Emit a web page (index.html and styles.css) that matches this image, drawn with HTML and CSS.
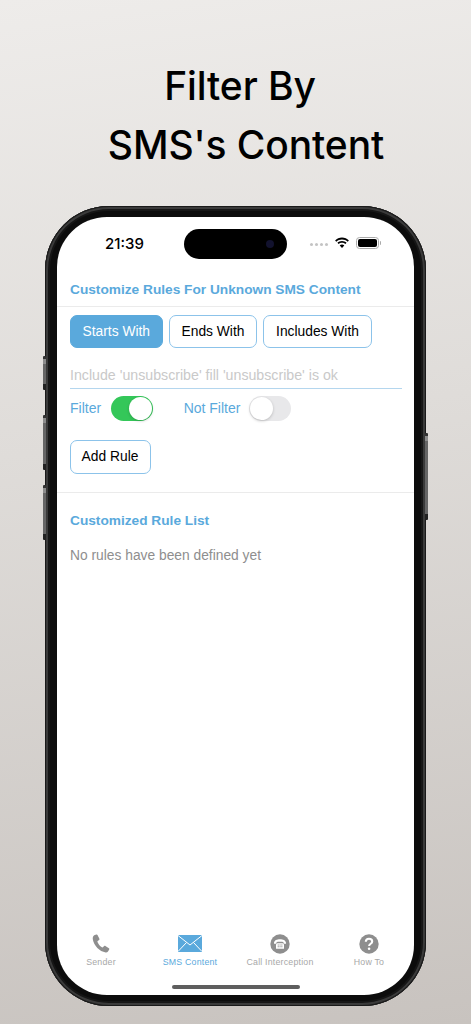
FILE: index.html
```html
<!DOCTYPE html>
<html lang="en">
<head>
<meta charset="utf-8">
<title>Filter By SMS's Content</title>
<link rel="stylesheet" href="styles.css">
</head>
<body>
<main class="page">
  <h1 class="title"><span class="line-one">Filter By</span><span class="line-two">SMS's Content</span></h1>
  <div class="phone">
    <span class="side side-a"></span>
    <span class="side side-b"></span>
    <span class="side side-c"></span>
    <span class="side side-d"></span>
    <div class="screen">
      <div class="island"><span class="lens"></span></div>
      <header class="status">
        <span class="time">21:39</span>
        <div class="status-icons">
          <span class="dots"><i></i><i></i><i></i><i></i></span>
          <svg class="wifi" width="16" height="12" viewBox="0 0 16 12"><path d="M8 2.400c2.200 0 4.200.9 5.700 2.300l1.200-1.300C13.100 1.600 10.700.5 8 .5S2.900 1.600 1.100 3.400l1.200 1.300C3.800 3.300 5.800 2.400 8 2.400z"/><path d="M8 5.800c1.300 0 2.500.5 3.400 1.300l1.200-1.300C11.400 4.700 9.800 4 8 4s-3.400.7-4.600 1.800l1.200 1.300C5.500 6.300 6.700 5.800 8 5.800z"/><path d="M8 7.500c-.9 0-1.700.3-2.300.9L8 11l2.300-2.600C9.700 7.800 8.900 7.500 8 7.500z"/></svg>
          <span class="battery"><span class="battery-fill"></span></span>
        </div>
      </header>
      <section class="rules">
        <h2 class="heading">Customize Rules For Unknown SMS Content</h2>
        <div class="tabs">
          <button class="btn btn-active tab-starts">Starts With</button>
          <button class="btn tab-ends">Ends With</button>
          <button class="btn tab-includes">Includes With</button>
        </div>
        <div class="field">Include 'unsubscribe' fill 'unsubscribe' is ok</div>
        <div class="toggles">
          <span class="toggle-label">Filter</span>
          <span class="switch switch-on"><span class="knob"></span></span>
          <span class="toggle-label label-not">Not Filter</span>
          <span class="switch"><span class="knob"></span></span>
        </div>
        <button class="btn btn-add">Add Rule</button>
      </section>
      <section class="list">
        <h2 class="heading">Customized Rule List</h2>
        <p class="empty">No rules have been defined yet</p>
      </section>
      <nav class="tabbar">
        <div class="tab">
          <svg width="20" height="20" viewBox="0 0 20 20"><path fill="#8e8e8e" d="M3.200 1.300 5.300.5c.5-.2 1 0 1.200.5l1.900 3.800c.2.500.1.900-.3 1.200L6.700 7c-.3.300-.4.600-.2 1 .9 2.200 2.300 4 4.400 5.300.4.200.7.200 1-.1l1.300-1.100c.4-.3.800-.4 1.200-.1l3.500 2.300c.5.300.6.800.3 1.200l-1.200 1.900c-.5.800-1.300 1.200-2.300 1.100C8.500 17.500 3 11.800 1.800 5.300c-.2-1.700.2-3.200 1.400-4z"/></svg>
          <span class="tab-text">Sender</span>
        </div>
        <div class="tab tab-on">
          <svg class="mail" width="24" height="17" viewBox="0 0 24 17"><rect width="24" height="17" fill="#5aa9dc"/><path d="M0 .5 12 10 24 .5M0 16.500 8.500 7.500M24 16.500 15.500 7.500" fill="none" stroke="#fff" stroke-width="1"/></svg>
          <span class="tab-text">SMS Content</span>
        </div>
        <div class="tab">
          <svg width="20" height="20" viewBox="0 0 20 20"><circle cx="10" cy="10" r="9.700" fill="#8e8e8e"/><path fill="#fff" d="M4 8.800C4.300 6.300 7 5.300 10 5.300s5.700 1 6 3.500v.9h-2.500V8.300c-1-.6-6-.6-7 0v1.400H4z"/><path fill="#fff" fill-rule="evenodd" d="M6 10.400 7.300 9.200h5.400l1.300 1.200v4.300H6zM7.700 10.600v.9h1.100v-.9zm1.800 0v.9h1.100v-.9zm1.800 0v.9h1.100v-.9zM7.700 12.300v.9h1.100v-.9zm1.800 0v.9h1.100v-.9zm1.800 0v.9h1.100v-.9z"/></svg>
          <span class="tab-text">Call Interception</span>
        </div>
        <div class="tab">
          <svg width="20" height="20" viewBox="0 0 20 20"><circle cx="10" cy="10" r="9.700" fill="#8e8e8e"/><path fill="none" stroke="#fff" stroke-width="2.100" d="M6.800 7.700C6.900 5.700 8.200 4.700 10 4.700c1.900 0 3.200 1.100 3.200 2.700 0 2.400-3.100 2.300-3.100 4.700"/><circle cx="10.100" cy="14.700" r="1.300" fill="#fff"/></svg>
          <span class="tab-text">How To</span>
        </div>
      </nav>
      <div class="home-bar"></div>
    </div>
  </div>
</main>
</body>
</html>
```
FILE: styles.css
```css
* { box-sizing: border-box; }
html, body { margin: 0; padding: 0; }
body { width: 471px; height: 1024px; overflow: hidden; font-family: "Liberation Sans", Arial, sans-serif; }
.page {
  width: 471px; height: 1024px; overflow: hidden;
  display: flex; flex-direction: column; align-items: center;
  background: linear-gradient(172deg, #eeecea 0%, #dfdcd9 42%, #c8c3bf 100%);
}
.title { margin: 56px 0 0 9px; display: flex; flex-direction: column; align-items: center; font-size: 39px; line-height: 59px; font-weight: 500; color: #000; height: 144px; font-family: Inter, sans-serif; letter-spacing: -.1px; }
.line-two { margin-left: 12px; }
.phone {
  position: relative; margin-top: 6px; width: 381px; height: 800px; flex: none;
  border-radius: 64px; padding: 11px 12px; background: #0c0c0c;
  box-shadow: inset 0 0 0 1px #1a1a1a, inset 0 0 0 3px #3a3a3a, inset 0 0 0 5px #161616;
}
.side { position: absolute; width: 3px; background: linear-gradient(180deg, #333 0 3px, #8c8c8c 3px 8px, #666 8px calc(100% - 6px), #222 calc(100% - 6px)); border-radius: 1px; }
.side-a { left: -2px; top: 150px; height: 34px; }
.side-b { left: -2px; top: 209px; height: 55px; }
.side-c { left: -2px; top: 279px; height: 55px; }
.side-d { right: -2px; top: 227px; height: 87px; }
.screen {
  position: relative; width: 357px; height: 778px; background: #fff; border-radius: 50px; overflow: hidden;
  display: flex; flex-direction: column;
}
.island { position: absolute; left: 127px; top: 12px; width: 103px; height: 30px; background: #000; border-radius: 15px; }
.lens { position: absolute; right: 13px; top: 11px; width: 8px; height: 8px; border-radius: 50%; background: #12122e; }
.status { height: 61px; flex: none; display: flex; align-items: flex-start; justify-content: space-between; padding: 17px 35px 0 48px; }
.time { font-family: Inter, sans-serif; font-size: 15px; line-height: 20px; font-weight: 500; color: #000; }
.status-icons { display: flex; align-items: center; gap: 6px; margin-top: 0; height: 18px; }
.dots { display: flex; gap: 2px; margin-top: 3px; }
.dots i { display: block; width: 3px; height: 3px; border-radius: 50%; background: #c4c4c4; }
.wifi { fill: #000; }
.battery { position: relative; width: 23px; height: 12px; border: 1px solid #aaa; border-radius: 3.500px; padding: 1px; }
.battery::after { content: ""; position: absolute; right: -3px; top: 3px; width: 1.500px; height: 4px; background: #aaa; border-radius: 0 1px 1px 0; }
.battery-fill { display: block; width: 100%; height: 100%; background: #000; border-radius: 2px; }
.heading { margin: 0; font-size: 13.700px; line-height: 20px; font-weight: 700; color: #5aa9dc; padding-left: 13px; }
.rules > .heading { border-bottom: 1px solid #ebebeb; box-sizing: content-box; height: 20px; padding-top: 2px; padding-bottom: 6px; }
.tabs { display: flex; gap: 6px; padding: 8px 13px 0 12.500px; }
.btn { height: 33px; border: 1px solid #8cc3ea; border-radius: 7px; background: #fff; color: #000; font: 400 13.800px/20px "Liberation Sans", sans-serif; padding: 0; }
.btn-active { background: #5aa9dc; border-color: #5aa9dc; color: #fff; }
.tab-starts { width: 93.500px; }
.tab-ends { width: 88px; }
.tab-includes { width: 109px; }
.field { margin: 15px 13px 0 12.500px; height: 26px; line-height: 25px; width: 332px; font-size: 14.200px; color: #c9c9c9; border-bottom: 1px solid #b4d6ee; white-space: nowrap; padding-left: .5px; }
.toggles { display: flex; align-items: center; padding: 6px 13px 0; box-sizing: content-box; height: 26px; }
.toggle-label { font-size: 14px; line-height: 20px; color: #5aa9dc; }
.label-not { margin-left: 31px; }
.switch { position: relative; width: 42px; height: 25px; margin-left: 9px; border-radius: 13px; background: #e8e8ea; flex: none; }
.switch-on { background: #34c759; margin-left: 9.500px; }
.knob { position: absolute; left: 1px; top: 1px; width: 23px; height: 23px; border-radius: 50%; background: #fff; box-shadow: 0 1px 3px rgba(0,0,0,.2); }
.switch-on .knob { left: 18px; }
.btn-add { display: block; margin: 19px 13px 0 12.500px; width: 81px; height: 34px; font-size: 13.800px; }
.list { margin-top: 18px; border-top: 1px solid #ebebeb; padding-top: 18px; flex: 1; }
.empty { margin: 15px 0 0 13px; font-size: 13.800px; line-height: 20px; color: #8e8e8e; }
.tabbar { flex: none; height: 73px; padding-top: 12px; display: grid; grid-template-columns: 88px 90px 90px 88px; }
.tab { display: flex; flex-direction: column; align-items: center; }
.tab svg { display: block; height: 20px; }
.tab .mail { height: 17px; margin: 1px 0 2px; }
.tab-text { margin-top: 3px; font-size: 8.800px; line-height: 11px; letter-spacing: .2px; font-weight: 400; color: #a8a8a8; white-space: nowrap; }
.tab-on .tab-text { color: #5aa9dc; }
.home-bar { position: absolute; left: 115px; bottom: 6px; width: 128px; height: 4px; border-radius: 2px; background: #5e5e5e; }
```
